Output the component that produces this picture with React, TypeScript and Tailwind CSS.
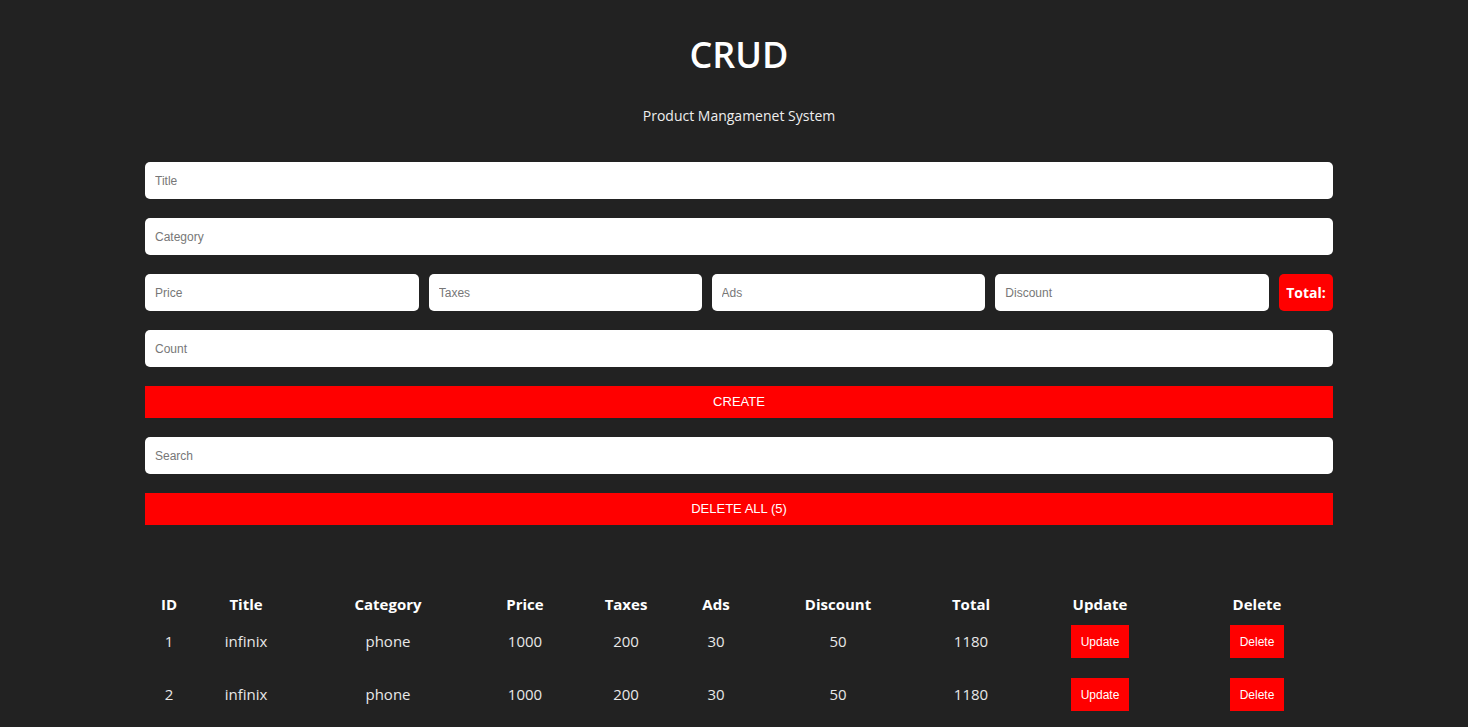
const rows = [1, 2, 3, 4, 5].map((id) => ({
  id,
  title: "infinix",
  category: "phone",
  price: 1000,
  taxes: 200,
  ads: 30,
  discount: 50,
  total: 1180,
}));

const cols = [
  { label: "ID", w: "w-[48px]" },
  { label: "Title", w: "w-[106px]" },
  { label: "Category", w: "w-[178px]" },
  { label: "Price", w: "w-[96px]" },
  { label: "Taxes", w: "w-[106px]" },
  { label: "Ads", w: "w-[74px]" },
  { label: "Discount", w: "w-[170px]" },
  { label: "Total", w: "w-[96px]" },
  { label: "Update", w: "w-[162px]" },
  { label: "Delete", w: "w-[152px]" },
];

function Field({ placeholder, className = "" }: { placeholder: string; className?: string }) {
  return (
    <input
      placeholder={placeholder}
      className={`h-[37px] rounded-[5px] bg-white px-[10px] text-[12px] text-gray-800 outline-none placeholder:text-[#777] font-['Liberation_Sans',Arial,sans-serif] ${className}`}
    />
  );
}

export default function App() {
  return (
    <div className="min-h-screen bg-[#222222] text-white font-['Open_Sans','Noto_Sans',sans-serif]">
      <div className="ml-[145px] w-[1188px]">
        {/* Header */}
        <div className="flex flex-col items-center pt-[33px]">
          <h1 className="text-[36px] leading-[44px] font-semibold">CRUD</h1>
          <p className="mt-[29px] text-[14px] leading-[20px] text-[#eee]">Product Mangamenet System</p>
        </div>

        {/* Form */}
        <div className="mt-[36px] flex flex-col gap-[19px]">
          <Field placeholder="Title" className="w-full" />
          <Field placeholder="Category" className="w-full" />
          <div className="flex gap-[10px]">
            <Field placeholder="Price" className="w-[274px]" />
            <Field placeholder="Taxes" className="w-[273px]" />
            <Field placeholder="Ads" className="w-[274px]" />
            <Field placeholder="Discount" className="w-[274px]" />
            <div className="flex h-[37px] w-[54px] items-center justify-center rounded-[5px] bg-[#ff0000] text-[14px] font-bold">
              Total:
            </div>
          </div>
          <Field placeholder="Count" className="w-full" />
          <button className="h-[32px] w-full bg-[#ff0000] text-[13px] font-['Liberation_Sans',Arial,sans-serif]">
            CREATE
          </button>
          <Field placeholder="Search" className="w-full" />
          <button className="h-[32px] w-full bg-[#ff0000] text-[13px] font-['Liberation_Sans',Arial,sans-serif]">
            DELETE ALL (5)
          </button>
        </div>

        {/* Table */}
        <table className="mt-[69px] w-full table-fixed border-collapse text-center">
          <thead>
            <tr>
              {cols.map((c) => (
                <th key={c.label} className={`${c.w} h-[21px] p-0 text-[15px] font-bold leading-[21px]`}>
                  {c.label}
                </th>
              ))}
            </tr>
          </thead>
          <tbody className="text-[15px] text-[#e8e8e8]">
            {rows.map((r) => (
              <tr key={r.id}>
                <td className="py-[10px]">{r.id}</td>
                <td className="py-[10px]">{r.title}</td>
                <td className="py-[10px]">{r.category}</td>
                <td className="py-[10px]">{r.price}</td>
                <td className="py-[10px]">{r.taxes}</td>
                <td className="py-[10px]">{r.ads}</td>
                <td className="py-[10px]">{r.discount}</td>
                <td className="py-[10px]">{r.total}</td>
                <td className="py-[10px]">
                  <button className="h-[33px] w-[58px] bg-[#ff0000] text-[12px] text-white font-['Liberation_Sans',Arial,sans-serif]">
                    Update
                  </button>
                </td>
                <td className="py-[10px]">
                  <button className="h-[33px] w-[54px] bg-[#ff0000] text-[12px] text-white font-['Liberation_Sans',Arial,sans-serif]">
                    Delete
                  </button>
                </td>
              </tr>
            ))}
          </tbody>
        </table>
      </div>
    </div>
  );
}
